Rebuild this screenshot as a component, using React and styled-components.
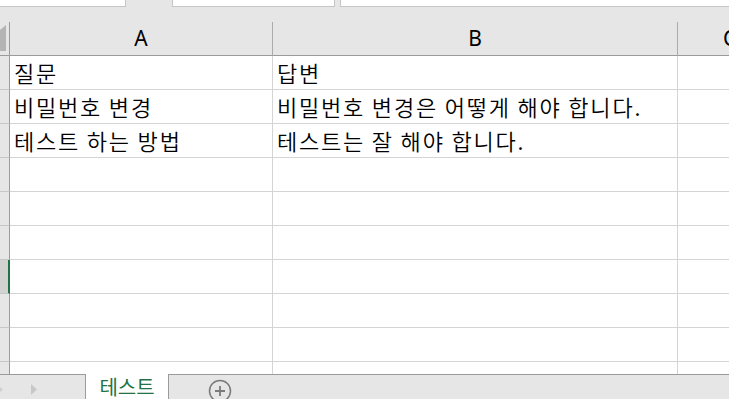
import React from 'react';
import styled, { createGlobalStyle } from 'styled-components';

const GlobalStyle = createGlobalStyle`
  html, body { margin: 0; padding: 0; background: #e6e6e6; }
  body { font-family: "Noto Sans CJK KR", "Noto Sans", sans-serif; }
`;

const rows = [
  ['질문', '답변'],
  ['비밀번호 변경', '비밀번호 변경은 어떻게 해야 합니다.'],
  ['테스트 하는 방법', '테스트는 잘 해야 합니다.'],
  ['', ''], ['', ''], ['', ''], ['', ''], ['', ''], ['', ''], ['', ''],
];
const SELECTED_ROW = 6;

const App = () => {
  return (
    <>
      <GlobalStyle />
      <Window>
        <TopBar>
          <NameBox />
          <FxBox />
          <FormulaBox />
        </TopBar>
        <Sheet>
          <Corner>
            <svg width="6" height="28" viewBox="0 0 6 28">
              <polygon points="6,0 6,26 0,26 0,5" fill="#b4b4b4" />
            </svg>
          </Corner>
          <ColHead>A</ColHead>
          <ColHead>B</ColHead>
          <ColHead $clip>C</ColHead>
          {rows.map((r, i) => (
            <React.Fragment key={i}>
              <RowHead $selected={i === SELECTED_ROW} />
              <Cell>{r[0]}</Cell>
              <Cell>{r[1]}</Cell>
              <Cell />
            </React.Fragment>
          ))}
        </Sheet>
        <TabBar>
          <NavArea>
            <svg width="86" height="24" viewBox="0 0 86 24">
              <polygon points="-3,9 3,14.5 -3,20" fill="#d0d0d0" />
              <polygon points="31,9 37,14.5 31,20" fill="#c8c8c8" />
            </svg>
          </NavArea>
          <SheetTab>테스트</SheetTab>
          <TabRest>
            <AddButton>
              <svg width="24" height="24" viewBox="0 0 24 24">
                <circle cx="12" cy="12" r="10.5" fill="none" stroke="#7b7b7b" strokeWidth="1.5" />
                <path d="M12 7v10M7 12h10" stroke="#7b7b7b" strokeWidth="1.8" />
              </svg>
            </AddButton>
          </TabRest>
        </TabBar>
      </Window>
    </>
  );
};
export default App;

const Window = styled.div`
  width: 729px;
  height: 399px;
  display: flex;
  flex-direction: column;
  overflow: hidden;
  background: #e6e6e6;
`;

const TopBar = styled.div`
  height: 22px;
  display: flex;
  align-items: flex-start;
  flex-shrink: 0;
`;

const WhiteBox = styled.div`
  height: 6px;
  background: #ffffff;
  border-bottom: 1px solid #c6c6c6;
`;

const NameBox = styled(WhiteBox)`
  width: 125px;
  border-right: 1px solid #c6c6c6;
`;

const FxBox = styled(WhiteBox)`
  width: 161px;
  margin-left: 46px;
  border-left: 1px solid #c6c6c6;
  border-right: 1px solid #c6c6c6;
`;

const FormulaBox = styled(WhiteBox)`
  flex: 1;
  margin-left: 5px;
  border-left: 1px solid #c6c6c6;
`;

const Sheet = styled.div`
  flex: 1;
  display: grid;
  grid-template-columns: 10px 263px 405px 1fr;
  grid-auto-rows: 34px;
  grid-template-rows: 34px;
  align-content: start;
  overflow: hidden;
  background: #ffffff;
`;

const Corner = styled.div`
  box-sizing: border-box;
  background: #e6e6e6;
  border-right: 1px solid #9b9b9b;
  border-bottom: 1px solid #9b9b9b;
  display: flex;
  align-items: flex-end;
  justify-content: flex-start;
  overflow: hidden;
  svg { display: block; margin-bottom: 2px; }
`;

const ColHead = styled.div`
  box-sizing: border-box;
  background: #e6e6e6;
  border-right: 1px solid #ababab;
  border-bottom: 1px solid #9b9b9b;
  display: flex;
  align-items: center;
  justify-content: ${(p) => (p.$clip ? 'flex-start' : 'center')};
  padding-left: ${(p) => (p.$clip ? '45px' : '0')};
  font-family: "Noto Sans", "Open Sans", sans-serif;
  font-size: 21px;
  color: #000;
  line-height: 1;
  padding-bottom: 1px;
  white-space: nowrap;
`;

const RowHead = styled.div`
  box-sizing: border-box;
  background: ${(p) => (p.$selected ? '#d2d2d2' : '#e6e6e6')};
  border-right: ${(p) => (p.$selected ? '2px solid #217346' : '1px solid #9b9b9b')};
  border-bottom: 1px solid #c6c6c6;
`;

const Cell = styled.div`
  box-sizing: border-box;
  border-right: 1px solid #d4d4d4;
  border-bottom: 1px solid #d4d4d4;
  display: flex;
  align-items: center;
  padding: 0 0 1px 4px;
  font-family: "Noto Sans CJK KR", "Noto Sans", sans-serif;
  font-size: 22px;
  font-weight: 350;
  letter-spacing: 1.8px;
  line-height: 1;
  color: #000;
  white-space: nowrap;
  overflow: hidden;
`;

const TabBar = styled.div`
  height: 25px;
  flex-shrink: 0;
  display: flex;
`;

const NavArea = styled.div`
  box-sizing: border-box;
  width: 86px;
  border-top: 1px solid #9b9b9b;
  border-right: 1px solid #9b9b9b;
  background: #e6e6e6;
  overflow: hidden;
  svg { display: block; }
`;

const SheetTab = styled.div`
  width: 82px;
  background: #ffffff;
  color: #217346;
  font-family: "Noto Sans CJK KR", sans-serif;
  font-size: 20px;
  line-height: 20px;
  display: flex;
  justify-content: center;
  align-items: flex-start;
  padding-top: 3px;
  box-sizing: border-box;
`;

const TabRest = styled.div`
  flex: 1;
  box-sizing: border-box;
  border-top: 1px solid #9b9b9b;
  border-left: 1px solid #9b9b9b;
  background: #e6e6e6;
  padding: 4px 0 0 39px;
`;

const AddButton = styled.div`
  width: 24px;
  height: 24px;
  svg { display: block; }
`;
